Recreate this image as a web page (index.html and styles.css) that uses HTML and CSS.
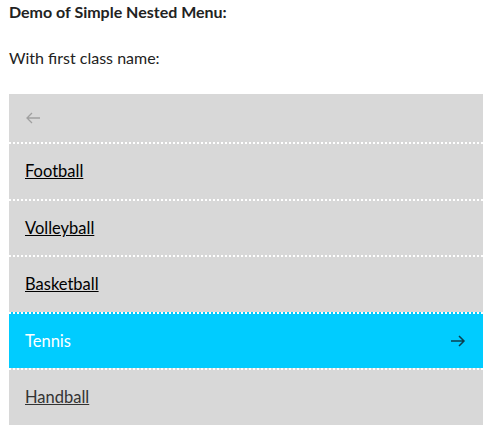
FILE: index.html
```html
<!DOCTYPE html>
<html>
<head>
<meta charset="utf-8">
<link rel="stylesheet" href="styles.css">
</head>
<body>
<p class="title">Demo of Simple Nested Menu:</p>
<p class="sub">With first class name:</p>
<ul class="menu">
  <li class="back"><svg width="16" height="16" viewBox="0 0 16 16"><path d="M15 8H2M7 3L2 8l5 5" fill="none" stroke="#a0a0a0" stroke-width="1.3"/></svg></li>
  <li class="item"><a href="#">Football</a></li>
  <li class="item"><a href="#">Volleyball</a></li>
  <li class="item"><a href="#">Basketball</a></li>
  <li class="item active"><span>Tennis</span><svg width="16" height="16" viewBox="0 0 16 16"><path d="M1 8h13M9 3l5 5-5 5" fill="none" stroke="#0b3f4f" stroke-width="1.5"/></svg></li>
  <li class="item muted"><a href="#">Handball</a></li>
</ul>
</body>
</html>
```
FILE: styles.css
```css
body {
  margin: 0;
  padding: 2px 8px 0 9px;
  font-family: Lato, "Open Sans", sans-serif;
  font-size: 16px;
  color: #222;
}
.title {
  font-weight: bold;
  margin: 0;
  line-height: 20px;
}
.sub {
  margin: 26px 0 0 0;
  line-height: 20px;
}
.menu {
  list-style: none;
  margin: 26px 0 0 0;
  padding: 0;
  width: 474px;
  background: #d8d8d8;
  font-size: 16.5px;
}
.menu li {
  display: flex;
  align-items: center;
  justify-content: space-between;
  padding: 0 17px 0 16px;
}
.back {
  height: 48px;
}
.item {
  height: 54.5px;
  border-top: 2px dotted #fff;
}
.item a {
  color: #000;
  text-decoration: underline;
}
.active {
  background: #00ccff;
  color: #fff;
}
.muted a {
  color: #333;
}
```
